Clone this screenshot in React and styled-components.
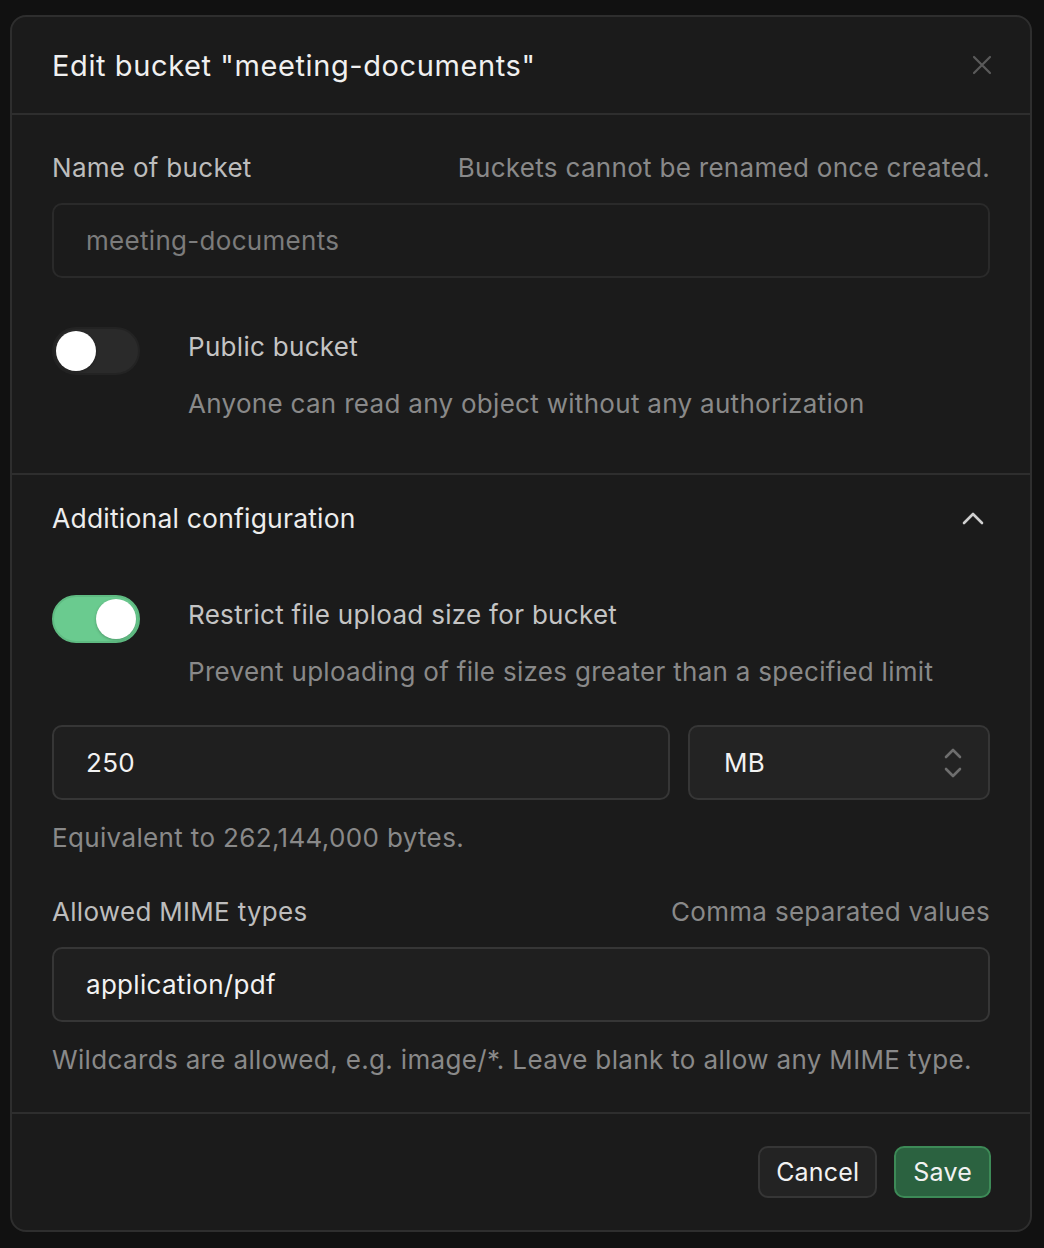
import React from "react";
import styled, { createGlobalStyle } from "styled-components";

const Global = createGlobalStyle`
  html, body { margin: 0; padding: 0; background: #111111; }
  body { font-family: Inter, "Noto Sans", sans-serif; -webkit-font-smoothing: antialiased; }
  * { box-sizing: border-box; }
`;

const Page = styled.div`
  width: 1044px;
  height: 1248px;
  padding: 15px 12px 0 10px;
  background: #111111;
`;

const Dialog = styled.div`
  width: 1022px;
  height: 1217px;
  background: #1b1b1b;
  border: 2px solid #2e2e2e;
  border-radius: 16px;
  display: flex;
  flex-direction: column;
  overflow: hidden;
`;

const Header = styled.div`
  height: 98px;
  padding: 0 36px 0 40px;
  display: flex;
  align-items: center;
  justify-content: space-between;
  border-bottom: 2px solid #2e2e2e;
`;

const Title = styled.h2`
  margin: 0;
  font-size: 29px;
  font-weight: 400;
  color: #f0f0f0;
  letter-spacing: 0.6px;
`;

const CloseBtn = styled.button`
  background: none;
  border: none;
  padding: 0;
  width: 24px;
  height: 24px;
  display: flex;
  align-items: center;
  justify-content: center;
  color: #5a5a5a;
`;

const Section = styled.div`
  padding: ${(p) => p.$pad};
  border-bottom: ${(p) => (p.$divider ? "2px solid #2e2e2e" : "none")};
`;

const LabelRow = styled.div`
  display: flex;
  justify-content: space-between;
  align-items: center;
  height: 40px;
  margin-top: ${(p) => p.$mt || 0}px;
`;

const Label = styled.span`
  font-size: 26px;
  letter-spacing: 0.3px;
  color: #bdbdbd;
`;

const Hint = styled.span`
  font-size: 26px;
  letter-spacing: 0.3px;
  color: #898989;
`;

const Input = styled.div`
  height: 75px;
  margin-top: ${(p) => p.$mt || 0}px;
  border-radius: 10px;
  border: 2px solid ${(p) => (p.$disabled ? "#2a2a2a" : "#363636")};
  background: ${(p) => (p.$disabled ? "#1b1b1b" : "#1f1f1f")};
  display: flex;
  align-items: center;
  padding: 0 32px;
  font-size: 26px;
  letter-spacing: 0.3px;
  color: ${(p) => (p.$disabled ? "#7c7c7c" : "#f2f2f2")};
  flex: ${(p) => p.$flex || "none"};
`;

const Select = styled(Input)`
  width: 302px;
  background: #232323;
  justify-content: space-between;
  padding: 0 26px 0 34px;
`;

const HelpText = styled.div`
  font-size: 26px;
  letter-spacing: 0.35px;
  color: #898989;
  height: 40px;
  line-height: 40px;
  margin-top: ${(p) => p.$mt || 0}px;
`;

const ToggleRow = styled.div`
  display: grid;
  grid-template-columns: 88px 1fr;
  column-gap: 48px;
  margin-top: ${(p) => p.$mt || 0}px;
`;

const Track = styled.div`
  width: 88px;
  height: 48px;
  border-radius: 24px;
  background: ${(p) => (p.$on ? "#6acb8f" : "#2a2a2a")};
  border: 2px solid ${(p) => (p.$on ? "#5fbb82" : "#232323")};
  padding: 2px;
  display: flex;
  justify-content: ${(p) => (p.$on ? "flex-end" : "flex-start")};
`;

const Knob = styled.div`
  width: 40px;
  height: 40px;
  border-radius: 50%;
  background: #ffffff;
  box-shadow: 0 1px 3px rgba(0, 0, 0, 0.25);
`;

const ToggleText = styled.div`
  display: flex;
  flex-direction: column;
  gap: 17px;
`;

const ToggleTitle = styled.div`
  font-size: 26px;
  letter-spacing: 0.3px;
  color: #c4c4c4;
  height: 40px;
  line-height: 40px;
`;

const ToggleDesc = styled.div`
  font-size: 26px;
  letter-spacing: 0.3px;
  color: #898989;
  height: 40px;
  line-height: 40px;
`;

const CollapseHeader = styled.div`
  display: flex;
  justify-content: space-between;
  align-items: center;
  height: 40px;
  padding-right: 6px;
`;

const CollapseTitle = styled.span`
  font-size: 26.5px;
  letter-spacing: 0.2px;
  color: #ededed;
`;

const InputsRow = styled.div`
  display: flex;
  gap: 18px;
  margin-top: ${(p) => p.$mt || 0}px;
`;

const Footer = styled.div`
  display: flex;
  justify-content: flex-end;
  gap: 17px;
  padding: 32px 39px 0 0;
`;

const Button = styled.button`
  height: 52px;
  padding: 0 ${(p) => (p.$primary ? 17 : 16)}px;
  border-radius: 10px;
  font-family: inherit;
  font-size: 25px;
  letter-spacing: 0.2px;
  color: #f2f2f2;
  background: ${(p) => (p.$primary ? "#2b6240" : "#232323")};
  border: 2px solid ${(p) => (p.$primary ? "#3d8a57" : "#363636")};
`;

export default function App() {
  return (
    <>
      <Global />
      <Page>
        <Dialog>
          <Header>
            <Title>Edit bucket "meeting-documents"</Title>
            <CloseBtn aria-label="Close">
              <svg width="20" height="20" viewBox="0 0 20 20" fill="none" stroke="currentColor" strokeWidth="2.2" strokeLinecap="round">
                <path d="M2 2 L18 18 M18 2 L2 18" />
              </svg>
            </CloseBtn>
          </Header>

          <Section $pad="32px 40px 49px 40px" $divider>
            <LabelRow>
              <Label>Name of bucket</Label>
              <Hint>Buckets cannot be renamed once created.</Hint>
            </LabelRow>
            <Input $mt={16} $disabled>meeting-documents</Input>
            <ToggleRow $mt={49}>
              <Track>
                <Knob />
              </Track>
              <ToggleText>
                <ToggleTitle>Public bucket</ToggleTitle>
                <ToggleDesc>Anyone can read any object without any authorization</ToggleDesc>
              </ToggleText>
            </ToggleRow>
          </Section>

          <Section $pad="23px 40px 32px 40px" $divider>
            <CollapseHeader>
              <CollapseTitle>Additional configuration</CollapseTitle>
              <svg width="22" height="13" viewBox="0 0 22 13" fill="none" stroke="#cfcfcf" strokeWidth="2.6" strokeLinecap="round" strokeLinejoin="round">
                <path d="M2 11 L11 2 L20 11" />
              </svg>
            </CollapseHeader>
            <ToggleRow $mt={57}>
              <Track $on>
                <Knob />
              </Track>
              <ToggleText>
                <ToggleTitle>Restrict file upload size for bucket</ToggleTitle>
                <ToggleDesc>Prevent uploading of file sizes greater than a specified limit</ToggleDesc>
              </ToggleText>
            </ToggleRow>
            <InputsRow $mt={33}>
              <Input $flex="1">250</Input>
              <Select>
                <span>MB</span>
                <svg width="18" height="30" viewBox="0 0 18 30" fill="none" stroke="#6e6e6e" strokeWidth="2.6" strokeLinecap="round" strokeLinejoin="round">
                  <path d="M2 9 L9 2 L16 9" />
                  <path d="M2 21 L9 28 L16 21" />
                </svg>
              </Select>
            </InputsRow>
            <HelpText $mt={18}>Equivalent to 262,144,000 bytes.</HelpText>
            <LabelRow $mt={33}>
              <Label>Allowed MIME types</Label>
              <Hint>Comma separated values</Hint>
            </LabelRow>
            <Input $mt={16}>application/pdf</Input>
            <HelpText $mt={18}>Wildcards are allowed, e.g. image/*. Leave blank to allow any MIME type.</HelpText>
          </Section>

          <Footer>
            <Button>Cancel</Button>
            <Button $primary>Save</Button>
          </Footer>
        </Dialog>
      </Page>
    </>
  );
}
